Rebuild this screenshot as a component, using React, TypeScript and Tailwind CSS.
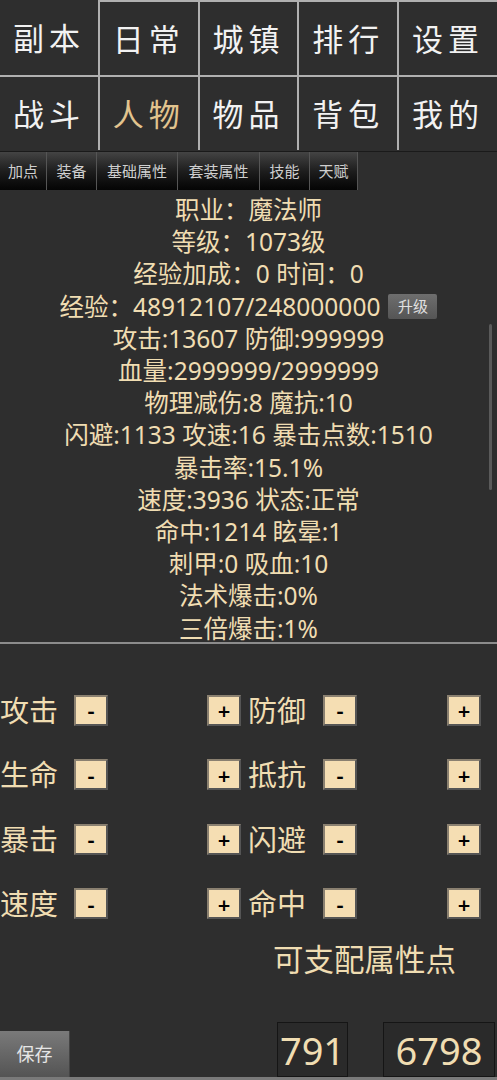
import React from "react";

const NAV_ROWS = [
  ["副本", "日常", "城镇", "排行", "设置"],
  ["战斗", "人物", "物品", "背包", "我的"],
];

const TABS = [
  { label: "加点", w: "w-[47px]" },
  { label: "装备", w: "w-[50px]" },
  { label: "基础属性", w: "w-[81px]" },
  { label: "套装属性", w: "w-[82px]" },
  { label: "技能", w: "w-[50px]" },
  { label: "天赋", w: "w-[48px]" },
];

const STATS = [
  "职业：魔法师",
  "等级：1073级",
  "经验加成：0 时间：0",
  "__exp__",
  "攻击:13607 防御:999999",
  "血量:2999999/2999999",
  "物理减伤:8 魔抗:10",
  "闪避:1133 攻速:16 暴击点数:1510",
  "暴击率:15.1%",
  "速度:3936 状态:正常",
  "命中:1214 眩晕:1",
  "刺甲:0 吸血:10",
  "法术爆击:0%",
  "三倍爆击:1%",
];

const ATTRS: [string, string][] = [
  ["攻击", "防御"],
  ["生命", "抵抗"],
  ["暴击", "闪避"],
  ["速度", "命中"],
];

const FONT = "font-['Noto_Sans','Noto_Sans_CJK_SC',sans-serif]";

function StepButton({ sign }: { sign: string }) {
  return (
    <button className="flex h-[31px] w-[34px] items-center justify-center border-2 border-t-[#8a8070] border-l-[#8a8070] border-r-[#555] border-b-[#555] bg-[#f5deb3] text-[22px] font-semibold leading-none text-black">
      {sign}
    </button>
  );
}

export default function App() {
  return (
    <div className={`h-[1080px] w-[497px] overflow-hidden bg-[#2e2e2e] ${FONT}`}>
      {/* top navigation */}
      <div className="h-[151px]">
        {NAV_ROWS.map((row, ri) => (
          <div key={ri} className={`flex h-[75px] ${ri === 1 ? "border-t-2 border-[#b0b0b0]" : ""}`}>
            {row.map((item, ci) => (
              <div
                key={item}
                className={`flex h-full flex-1 items-center justify-center text-[31px] tracking-[5px] ${
                  ci > 0 ? "border-l-2 border-[#b0b0b0]" : ""
                } ${ri === 0 && ci > 0 ? "border-t-2" : ""} ${
                  item === "人物" ? "text-[#e2c48e]" : "text-[#f2f2f2]"
                } font-['Noto_Sans_CJK_SC',serif]`}
              >
                {item}
              </div>
            ))}
          </div>
        ))}
      </div>

      {/* tabs */}
      <div className="flex h-[39px] border-t border-[#1a1a1a]">
        {TABS.map((t) => (
          <div
            key={t.label}
            className={`${t.w} flex items-center justify-center border-r border-[#555] bg-gradient-to-b from-[#444] via-[#1e1e1e] to-[#050505] text-[15px] text-[#cfcfcf]`}
          >
            {t.label}
          </div>
        ))}
      </div>

      {/* stats */}
      <div className="relative h-[452px] pt-[4px] text-center text-[24.5px] leading-[32.2px] text-[#f0ddb2]">
        {STATS.map((s) =>
          s === "__exp__" ? (
            <div key={s} className="flex items-center justify-center gap-[8px]">
              <span>经验：48912107/248000000</span>
              <span className="flex h-[25px] w-[49px] items-center justify-center rounded-[2px] bg-gradient-to-b from-[#6e6e6e] to-[#555] text-[15px] leading-none text-[#e0e0e0]">
                升级
              </span>
            </div>
          ) : (
            <div key={s}>{s}</div>
          )
        )}
        <div className="absolute right-[5px] top-[134px] h-[166px] w-[3px] rounded-full bg-[#5a5a5a]" />
      </div>

      <div className="h-[2px] bg-[#8c8c8c]" />

      {/* attribute points */}
      <div className="pt-[34px] text-[#f0ddb2]">
        {ATTRS.map(([a, b]) => (
          <div key={a} className="flex h-[64.5px] items-center">
            <span className="w-[74px] text-[29px] leading-none">{a}</span>
            <StepButton sign="-" />
            <div className="w-[99px]" />
            <StepButton sign="+" />
            <span className="ml-[7px] w-[75px] text-[29px] leading-none">{b}</span>
            <StepButton sign="-" />
            <div className="w-[90px]" />
            <StepButton sign="+" />
          </div>
        ))}
        <div className="mt-[3px] pl-[273px] text-[30.5px] leading-[40px]">可支配属性点</div>
      </div>

      {/* bottom row */}
      <div className="mt-[43px] flex h-[55px] items-end">
        <button className="flex h-[46px] w-[70px] items-center justify-center border-r border-[#444] bg-gradient-to-b from-[#7a7a7a] to-[#545454] text-[18px] text-[#e6e6e6]">
          保存
        </button>
        <div className="ml-[207px] flex h-[55px] w-[71px] items-center justify-center border border-[#151515] bg-[#2a2a2a] text-[38px] leading-none text-[#f0ddb2]">
          791
        </div>
        <div className="ml-[35px] flex h-[55px] w-[112px] items-center justify-center border border-[#151515] bg-[#2a2a2a] text-[38px] leading-none text-[#f0ddb2]">
          6798
        </div>
      </div>
      <div className="h-[3px] bg-[#7a7a7a]" />
    </div>
  );
}
